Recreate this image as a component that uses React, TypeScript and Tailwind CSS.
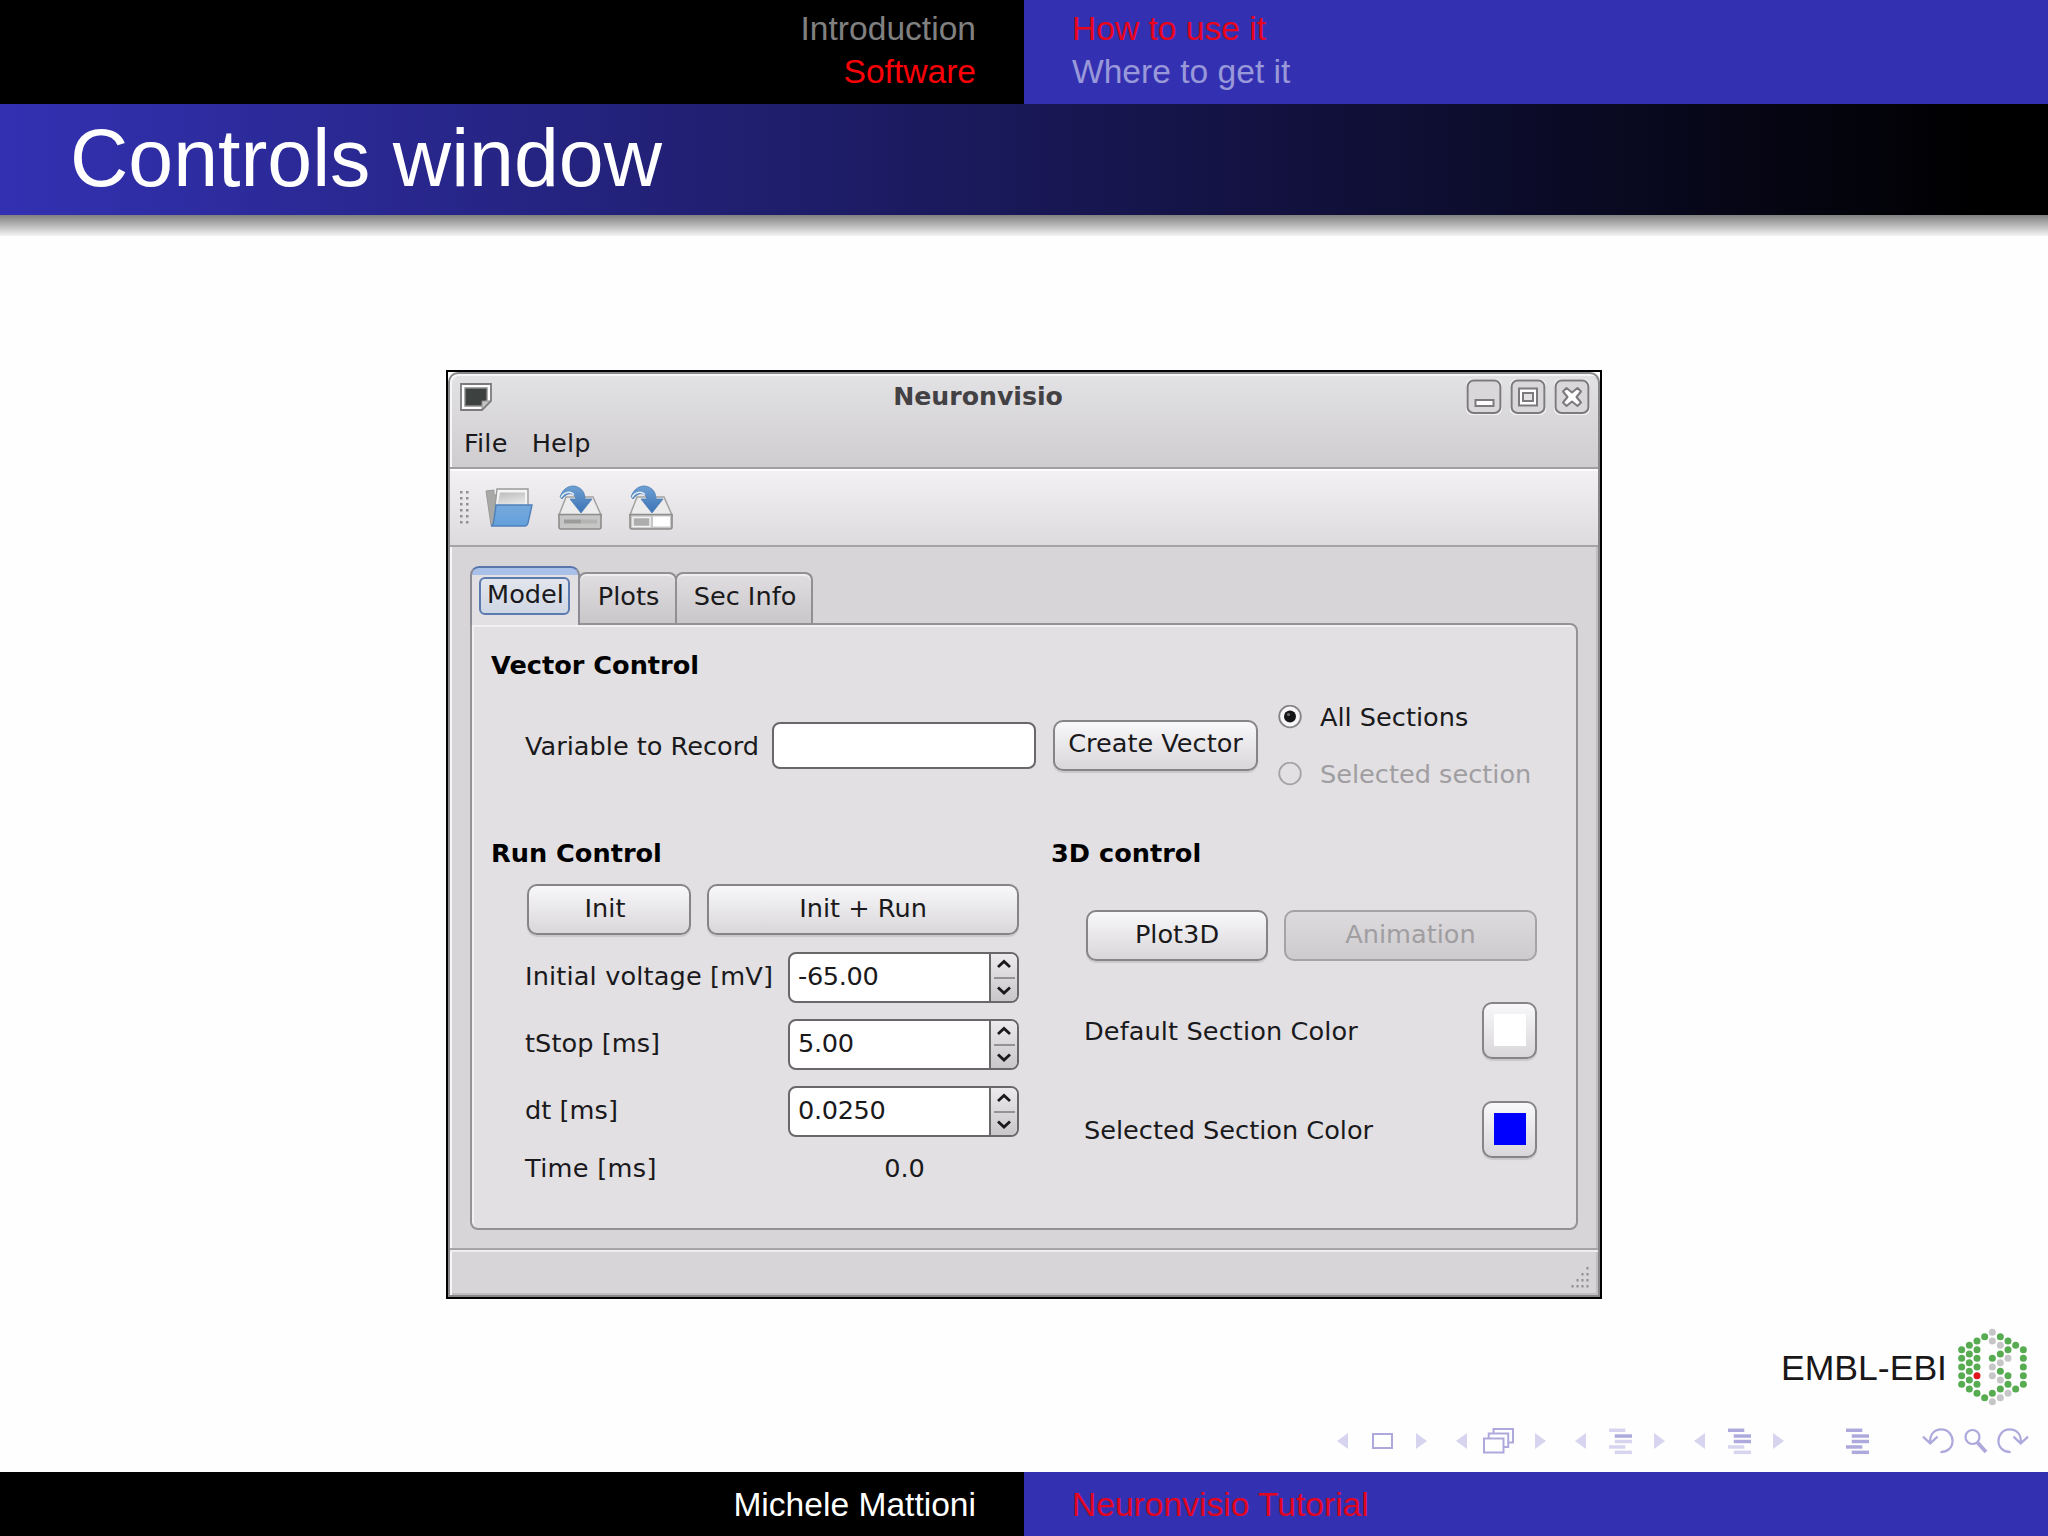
import type { ReactNode } from "react";

const spinRows = [
  { label: "Initial voltage [mV]", value: "-65.00", tracking: "tracking-[0.15px]" },
  { label: "tStop [ms]", value: "5.00", tracking: "tracking-[0.05px]" },
  { label: "dt [ms]", value: "0.0250", tracking: "tracking-[0.05px]" },
];

// Columns of the EMBL-EBI hexagon: [x, y, colour]
const logoDots: ReadonlyArray<readonly [number, number, "g" | "s" | "r"]> = [
  [604, 118, "g"], [604, 144, "g"], [604, 170, "g"], [604, 196, "g"], [604, 222, "g"],
  [627, 105, "g"], [627, 131, "g"], [627, 157, "g"], [627, 183, "g"], [627, 209, "g"], [627, 236, "g"],
  [650, 92, "g"], [650, 118, "g"], [650, 144, "g"], [650, 170, "g"], [650, 196, "r"], [650, 222, "g"], [650, 249, "g"],
  [673, 79, "g"], [673, 262, "g"],
  [696, 66, "s"], [696, 92, "s"], [696, 144, "g"], [696, 170, "s"], [696, 196, "s"], [696, 249, "g"], [696, 274, "s"],
  [720, 79, "g"], [720, 105, "s"], [720, 131, "g"], [720, 157, "s"], [720, 183, "g"], [720, 209, "s"], [720, 236, "g"], [720, 262, "s"],
  [743, 92, "g"], [743, 118, "g"], [743, 144, "s"], [743, 196, "g"], [743, 222, "g"], [743, 249, "s"],
  [766, 105, "g"], [766, 236, "g"],
  [789, 118, "g"], [789, 144, "g"], [789, 170, "g"], [789, 196, "g"], [789, 222, "g"],
];

const dotFill = { g: "#57ab50", s: "#c6c6c8", r: "#e0141c" };

export default function App() {
  return (
    <div className="flex h-[1536px] w-[2048px] flex-col overflow-hidden bg-[#fefefe] font-['Liberation_Sans',Arial,sans-serif]">
      <SlideHeader />

      <main className="flex h-[1236px] flex-col">
        <div className="mt-[134px] ml-[446px]">
          <ControlsWindow />
        </div>
        <div className="mt-7 mr-[19px] flex h-20 items-center justify-end">
          <span className="mr-2.5 pt-0.5 text-[35.6px] leading-10 text-[#1a1718]">EMBL-EBI</span>
          <svg width="72" height="80" viewBox="590 50 216 240" aria-hidden="true">
            {logoDots.map(([x, y, kind]) => (
              <circle key={`${x}-${y}`} cx={x} cy={y} r="10.5" fill={dotFill[kind]} />
            ))}
          </svg>
        </div>
        <NavigationSymbols />
      </main>

      <footer className="flex h-16 text-[33.6px] leading-[43px]">
        <div className="w-1/2 bg-black pt-[11px] pr-12 text-right text-white">
          Michele Mattioni
        </div>
        <div className="w-1/2 bg-[#3331b2] pt-[11px] pl-12 text-[#e2051f]">
          Neuronvisio Tutorial
        </div>
      </footer>
    </div>
  );
}

function SlideHeader() {
  return (
    <header className="h-[236px]">
      <div className="flex h-[104px] text-[33.6px] leading-[43px]">
        <div className="w-1/2 bg-black pt-[7px] pr-12 text-right">
          <p className="text-[#808080]">Introduction</p>
          <p className="text-[#fb0007]">Software</p>
        </div>
        <div className="w-1/2 bg-[#3331b2] pt-[7px] pl-12">
          <p className="text-[#e8041c]">How to use it</p>
          <p className="text-[#9998d8]">Where to get it</p>
        </div>
      </div>
      <div className="flex h-[111px] items-center bg-linear-to-r/srgb from-[#3331b2] to-black to-97% pl-[70px]">
        <h1 className="pb-1 text-[80.7px] leading-[90px] text-white">Controls window</h1>
      </div>
      <div className="h-[21px] bg-linear-to-b from-[#808080] to-[#f6f5f6]" />
    </header>
  );
}

function ControlsWindow() {
  return (
    <section className="h-[929px] w-[1156px] border-2 border-black bg-[#fdfdfd] font-['DejaVu_Sans',Verdana,sans-serif] text-[25.6px] leading-[30px] text-[#1a191b]">
      <div className="flex h-full w-full flex-col rounded-t-[10px] border-2 border-[#89878a] bg-[#d7d5d8] shadow-[inset_2px_2px_0_#f6f5f7,inset_-2px_-2px_0_#c0bec1]">
        <div className="mt-0.5 ml-0.5 h-[91px] rounded-t-[8px] bg-linear-to-b from-[#e2e1e3] to-[#cfcdd0]">
          <div className="flex h-[41px] items-center pr-2 pl-2">
            <WindowIcon />
            <p className="flex-1 pr-0.5 text-center text-[25.2px] font-bold text-[#434144]">
              Neuronvisio
            </p>
            <div className="flex gap-2">
              <TitleButton>
                <rect x="9.5" y="21" width="18" height="6" />
              </TitleButton>
              <TitleButton>
                <rect x="9" y="9.5" width="18" height="17" />
                <rect x="13" y="14" width="10" height="8" fill="#e2e0e3" />
              </TitleButton>
              <TitleButton>
                <path d="M9 12.5 12.5 9 18 13.5 23.5 9 27 12.5 22.5 18 27 23.5 23.5 27 18 22.5 12.5 27 9 23.5 13.5 18Z" strokeLinejoin="round" />
              </TitleButton>
            </div>
          </div>
          <nav className="flex h-[51px] items-center gap-6 pl-3 tracking-[0.2px]">
            <span>File</span>
            <span>Help</span>
          </nav>
        </div>

        <div className="flex h-20 shrink-0 items-center border-t-2 border-b-2 border-t-[#a09ea1] border-b-[#a5a3a6] bg-linear-to-b from-[#f3f1f4] to-[#dddbde] pt-0.5 pl-[10px] shadow-[inset_0_2px_0_#fdfdfd]">
          <svg width="10" height="34" viewBox="0 0 10 34" fill="#918f92">
            {[0, 6, 12, 18, 24, 30].map((y) => (
              <g key={y}>
                <rect x="0" y={y} width="2.5" height="2.5" />
                <rect x="6" y={y} width="2.5" height="2.5" />
              </g>
            ))}
          </svg>
          <FolderIcon />
          <DriveIcon />
          <DriveIcon saveAs />
        </div>

        <div className="mt-[19px] ml-5 flex h-[57px] items-end">
          <div className="relative z-10 -mb-0.5 h-[59px] w-[110px] rounded-t-[9px] border-2 border-b-0 border-x-[#8a8b94] border-t-[#5876ad] bg-linear-to-b from-[#a9c1e9] from-[7px] to-[#e2e0e3] to-[7px]">
            <div className="mt-[9px] ml-[7px] flex h-[38px] w-[91px] items-center justify-center rounded-md border-2 border-[#5b7bb0] bg-linear-to-b from-[#e2e5ec] to-[#cfd7e4]">
              <span className="-mt-1 pl-0.5">Model</span>
            </div>
          </div>
          <div className="-ml-0.5 flex h-[51px] w-[99px] items-center justify-center rounded-t-[8px] border-2 border-b-0 border-[#918f92] bg-linear-to-b from-[#e0dee1] to-[#c9c7ca] pb-1.5 pl-0.5 shadow-[inset_0_2px_0_#eeedef]">
            Plots
          </div>
          <div className="-ml-0.5 flex h-[51px] w-[138px] items-center justify-center rounded-t-[8px] border-2 border-b-0 border-[#918f92] bg-linear-to-b from-[#e0dee1] to-[#c9c7ca] pb-1.5 pl-0.5 shadow-[inset_0_2px_0_#eeedef]">
            Sec Info
          </div>
        </div>

        <ModelPanel />

        <div className="mt-[18px] flex h-[46px] items-end justify-end border-t-2 border-[#a6a4a7] pr-[9px] pb-[5px] shadow-[inset_0_2px_0_#eeedef]">
          <svg width="18" height="22" viewBox="0 0 18 22" fill="#8f8d90">
            {[0, 1, 2, 3].map((row) =>
              Array.from({ length: row + 1 }, (_, i) => (
                <rect key={`${row}-${i}`} x={15.5 - i * 5} y={row * 6} width="2" height="2.5" />
              ))
            )}
          </svg>
        </div>
      </div>
    </section>
  );
}

function ModelPanel() {
  return (
    <div className="ml-5 h-[607px] w-[1108px] shrink-0 rounded-lg rounded-tl-none border-2 border-[#949295] bg-[#e2e0e3] pl-[19px] shadow-[inset_2px_2px_0_#f1f0f2]">
      <h2 className="mt-5 flex h-10 items-center font-bold text-black">Vector Control</h2>

      <div className="flex h-[148px] items-start pl-[33px]">
        <div className="mt-[34px] flex h-[52px] items-center">
          <label className="w-[248px] pt-0.5 pl-px">Variable to Record</label>
          <div className="h-[47px] w-[264px] rounded-lg border-2 border-[#69676a] bg-white" />
          <PushButton className="ml-[17px] w-[205px]">Create Vector</PushButton>
        </div>
        <div className="mt-[3px] ml-5">
          <div className="flex h-[57px] items-center gap-[18px]">
            <Radio checked />
            <span>All Sections</span>
          </div>
          <div className="flex h-[57px] items-center gap-[18px]">
            <Radio />
            <span className="text-[#a09ea1]">Selected section</span>
          </div>
        </div>
      </div>

      <div className="grid grid-cols-[560px_1fr]">
        <RunControl />
        <ViewControl />
      </div>
    </div>
  );
}

function RunControl() {
  return (
    <div>
      <h2 className="flex h-10 items-center font-bold text-black">Run Control</h2>
      <div className="pl-[33px]">
        <div className="mt-[11px] ml-[3px] flex gap-4">
          <PushButton className="w-[164px] pr-2">Init</PushButton>
          <PushButton className="w-[312px]">Init + Run</PushButton>
        </div>
        <div className="mt-[17px] flex flex-col gap-4">
          {spinRows.map((row) => (
            <div key={row.label} className="flex h-[51px] items-center">
              <span className={`w-[264px] pb-1 pl-px whitespace-nowrap ${row.tracking}`}>
                {row.label}
              </span>
              <SpinBox value={row.value} />
            </div>
          ))}
        </div>
        <div className="mt-4 flex h-[30px] items-center">
          <span className="w-[264px] pl-px tracking-[0.3px]">Time [ms]</span>
          <span className="w-[233px] text-center">0.0</span>
        </div>
      </div>
    </div>
  );
}

function ViewControl() {
  return (
    <div>
      <h2 className="flex h-10 items-center font-bold text-black">3D control</h2>
      <div className="pl-[33px]">
        <div className="mt-[37px] ml-0.5 flex gap-4">
          <PushButton className="w-[182px]">Plot3D</PushButton>
          <PushButton className="w-[253px]" disabled>
            Animation
          </PushButton>
        </div>
        <div className="mt-[41px] flex w-[453px] items-center justify-between">
          <span className="tracking-[0.1px]">Default Section Color</span>
          <Swatch className="bg-white" />
        </div>
        <div className="mt-[42px] flex w-[453px] items-center justify-between">
          <span>Selected Section Color</span>
          <Swatch className="bg-[#0000fe]" />
        </div>
      </div>
    </div>
  );
}

type PushButtonProps = {
  readonly children: ReactNode;
  readonly className: string;
  readonly disabled?: boolean;
};

function PushButton({ children, className, disabled = false }: PushButtonProps) {
  return (
    <button
      type="button"
      disabled={disabled}
      className={[
        "flex h-[51px] items-center justify-center rounded-[10px] border-2 pb-1",
        disabled
          ? "border-[#a5a3a6] bg-linear-to-b from-[#dddbde] to-[#cdcbce] text-[#a09ea1]"
          : "border-[#868487] bg-linear-to-b from-[#f8f7f9] to-[#d9d7da] shadow-[0_2px_1px_#c9c7ca]",
        className,
      ].join(" ")}
    >
      {children}
    </button>
  );
}

function Swatch({ className }: { readonly className: string }) {
  return (
    <div className="flex h-[57px] w-[55px] justify-center rounded-[10px] border-2 border-[#868487] bg-linear-to-b from-[#f8f7f9] to-[#d9d7da] pt-2.5 shadow-[0_2px_1px_#c9c7ca]">
      <div className={`h-8 w-8 ${className}`} />
    </div>
  );
}

function Radio({ checked = false }: { readonly checked?: boolean }) {
  return (
    <svg width="24" height="24" viewBox="0 0 24 24">
      <circle
        cx="12"
        cy="11.5"
        r="10.8"
        fill={checked ? "#f6f5f7" : "#e2e0e3"}
        stroke={checked ? "#868487" : "#a5a3a6"}
        strokeWidth="1.8"
      />
      {checked ? (
        <>
          <circle cx="12" cy="11.5" r="6" fill="#151416" />
          <circle cx="10.5" cy="9.5" r="1.6" fill="#6b696c" />
        </>
      ) : null}
    </svg>
  );
}

function SpinBox({ value }: { readonly value: string }) {
  return (
    <div className="flex h-[51px] w-[231px] overflow-hidden rounded-lg border-2 border-[#69676a] bg-white">
      <span className="flex-1 pt-[7px] pl-2 tracking-[-0.35px]">{value}</span>
      <div className="w-[28px] border-l-2 border-[#69676a] bg-linear-to-b from-[#eceaed] to-[#c9c7ca]">
        <svg width="26" height="47" viewBox="0 0 26 47" fill="none" stroke="#1a191b" strokeWidth="2.8">
          <path d="M7 13 13 7.5 19 13M7 33.5 13 39 19 33.5" />
          <path d="M3 24H24" stroke="#949295" strokeWidth="1.8" />
        </svg>
      </div>
    </div>
  );
}

function TitleButton({ children }: { readonly children: ReactNode }) {
  return (
    <svg width="36" height="36" viewBox="0 0 36 36" fill="#fdfdfd" stroke="#7c7a7d" strokeWidth="2">
      <rect x="0.6" y="0.6" width="34.8" height="34.8" rx="6.5" fill="none" stroke="#f1f0f2" />
      <rect x="1.6" y="1.6" width="32.8" height="32.4" rx="6" fill="#d9d7da" />
      {children}
    </svg>
  );
}

function WindowIcon() {
  return (
    <svg width="32" height="28" viewBox="0 0 32 28">
      <path d="M1 1H31V18L22 27H1Z" fill="#fdfdfd" stroke="#7c7a7d" strokeWidth="1.8" />
      <path d="M5 5H27V17L21 23H5Z" fill="#3d4240" stroke="#8a8b8a" strokeWidth="1.4" />
      <path d="M22 26V18H30Z" fill="#c4c3c5" stroke="#8a8b8a" />
    </svg>
  );
}

function FolderIcon() {
  return (
    <svg className="ml-[15px]" width="48" height="42" viewBox="0 0 48 42">
      <defs>
        <linearGradient id="folder-front" x1="0" y1="0" x2="0" y2="1">
          <stop offset="0" stopColor="#76a9dc" />
          <stop offset="1" stopColor="#64a0dc" />
        </linearGradient>
        <linearGradient id="folder-paper" x1="0" y1="0" x2="0.3" y2="1">
          <stop offset="0" stopColor="#bdbcbd" />
          <stop offset="1" stopColor="#e9e9e9" />
        </linearGradient>
      </defs>
      <path d="M1 4 9 3V8H40V38H6Z" fill="#a8a8a6" stroke="#9a9a98" />
      <path d="M12 2H43V20H10Z" fill="#f4f4f4" stroke="#9a9a98" strokeWidth="1.4" />
      <path d="M15 5.500H40V20H12Z" fill="url(#folder-paper)" />
      <path d="M11 18H47L43 36Q42 39 40 39H6Q8 38 8.500 36Z" fill="url(#folder-front)" stroke="#4f80ba" strokeWidth="1.400" />
    </svg>
  );
}

function DriveIcon({ saveAs = false }: { readonly saveAs?: boolean }) {
  return (
    <svg className={saveAs ? "ml-[25px]" : "ml-6"} width="46" height="46" viewBox="0 0 46 46">
      <defs>
        <linearGradient id="save-arrow" x1="0" y1="0" x2="0" y2="1">
          <stop offset="0" stopColor="#6c9fd2" />
          <stop offset="1" stopColor="#3b73b5" />
        </linearGradient>
      </defs>
      <path d="M9 12H36L44 30H2Z" fill="#ececec" stroke="#a3a3a1" strokeWidth="1.500" />
      <path d="M2 29.500H44V42Q44 44 42 44H4Q2 44 2 42Z" fill="#c6c6c6" stroke="#8d8d8b" strokeWidth="1.600" />
      {saveAs ? (
        <>
          <rect x="5" y="32.500" width="17" height="9" fill="#adadad" stroke="#f2f2f2" strokeWidth="1.500" />
          <rect x="25" y="31.500" width="17" height="10" fill="#ffffff" />
        </>
      ) : (
        <>
          <path d="M7 36.500H24" stroke="#9c9c9a" strokeWidth="4" />
          <path d="M24 36.500H40" stroke="#b4b4b2" strokeWidth="4" />
        </>
      )}
      <path
        d="M3 12C6 3 12 1 17 1 24 2 28 7 28 14H35L24 28 13 14H19C18 8 11 6 5 14Z"
        fill="url(#save-arrow)"
        stroke="#4c7db7"
        strokeWidth="0.800"
      />
      <path d="M4 12.500C7 6.500 13 6 17 9.500" fill="none" stroke="#e6edf5" strokeWidth="1.400" />
    </svg>
  );
}

type ArrowProps = {
  readonly flip?: boolean;
};

function Arrow({ flip = false }: ArrowProps) {
  return (
    <svg width="11" height="16" viewBox="0 0 12 16" preserveAspectRatio="none" fill="#d6d4ee">
      <path d={flip ? "M0 0 12 8 0 16Z" : "M12 0 0 8 12 16Z"} />
    </svg>
  );
}

function Lines({ strong }: { readonly strong: readonly number[] }) {
  return (
    <svg width="23" height="27" viewBox="0 0 24 27">
      {[0, 6, 11.7, 17.4, 23].map((y, i) => (
        <rect
          key={y}
          x={i === 0 || i === 3 ? 0 : 6}
          y={y}
          width={i === 0 || i === 3 ? 17 : 18}
          height="3.6"
          fill={strong.includes(i) ? "#ada9dc" : "#d6d4ee"}
        />
      ))}
    </svg>
  );
}

function NavigationSymbols() {
  return (
    <div className="mt-[18px] ml-[1337px] flex h-8 items-center" aria-hidden="true">
      <div className="flex gap-[29px]">
        <NavGroup>
          <svg width="21" height="16" viewBox="0 0 21 16">
            <rect x="1" y="1" width="19" height="14" fill="none" stroke="#ada9dc" strokeWidth="2" />
          </svg>
        </NavGroup>
        <NavGroup>
          <svg className="-ml-1.5" width="31" height="26" viewBox="0 0 31 26" fill="#fefefe" stroke="#ada9dc" strokeWidth="2">
            <rect x="10.5" y="1" width="19.500" height="13.500" />
            <rect x="5.7" y="5.500" width="19.500" height="13.500" />
            <rect x="1" y="10.500" width="19.500" height="14" />
          </svg>
        </NavGroup>
        <NavGroup>
          <Lines strong={[1]} />
        </NavGroup>
        <NavGroup>
          <Lines strong={[0, 1, 2]} />
        </NavGroup>
      </div>
      <div className="ml-[62px]">
        <Lines strong={[0, 1, 2, 3, 4]} />
      </div>
      <svg className="ml-[53px]" width="32" height="28" viewBox="0 0 33 28" fill="none" stroke="#ada9dc" strokeWidth="2.3">
        <path d="M8.500 16C7.500 7 13 2 20 2 27 2 31.500 8 31.500 14 31.500 21 26 25.500 19 25.500M1 9.500 8.500 16.500 16 9.500" />
      </svg>
      <svg className="ml-2.5" width="24" height="26" viewBox="0 0 24 26" fill="none" stroke="#ada9dc">
        <circle cx="8.500" cy="9" r="7" strokeWidth="2.200" />
        <path d="M13.500 14.500 22 24" strokeWidth="3.800" />
      </svg>
      <svg className="ml-[9px]" width="32" height="28" viewBox="0 0 33 28" fill="none" stroke="#ada9dc" strokeWidth="2.3">
        <path d="M24.500 16C25.500 7 20 2 13 2 6 2 1.500 8 1.500 14 1.500 21 7 25.500 14 25.500M32 9.500 24.500 16.500 17 9.500" />
      </svg>
    </div>
  );
}

function NavGroup({ children }: { readonly children: ReactNode }) {
  return (
    <div className="flex w-[90px] items-center justify-between">
      <Arrow />
      {children}
      <Arrow flip />
    </div>
  );
}
